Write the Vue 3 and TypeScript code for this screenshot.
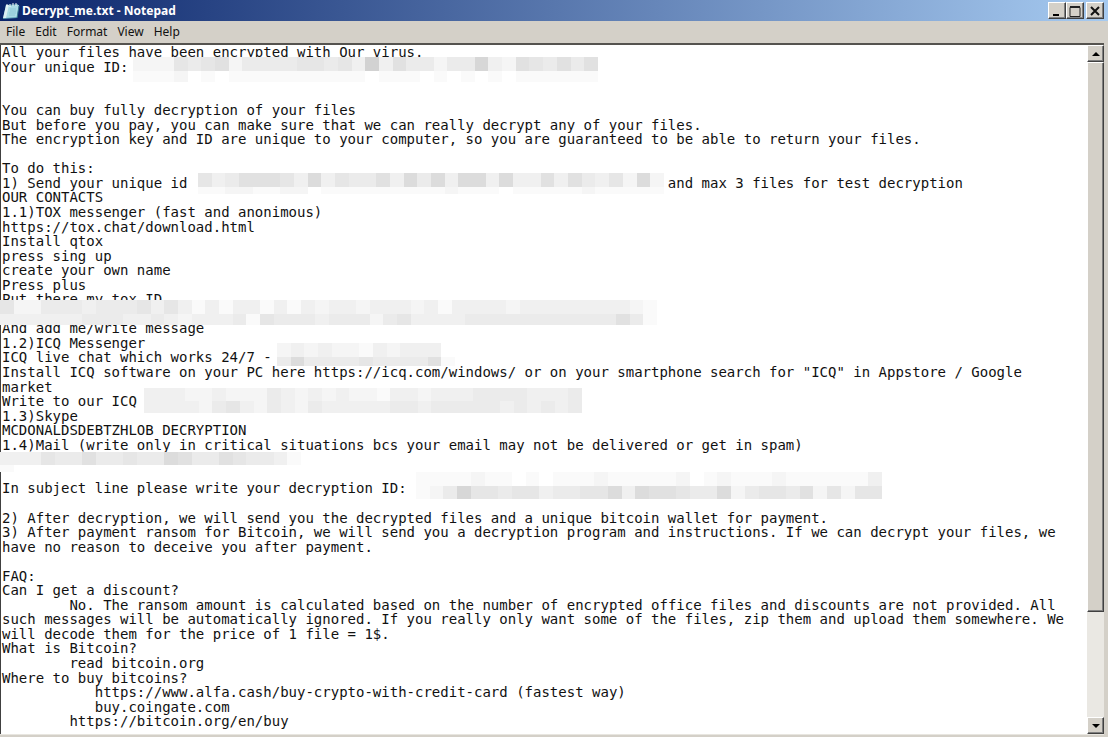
<script setup lang="ts">
import { ref } from 'vue'

interface MosaicRow {
  height: number
  cells: string
}

interface Mosaic {
  x: number
  y: number
  width: number
  rows: MosaicRow[]
}

const menus: string[] = ['File', 'Edit', 'Format', 'View', 'Help']

const gap = ' '.repeat(57)

const note = ref<string>(
  [
    'All your files have been encrypted with Our virus.',
    'Your unique ID:',
    '',
    '',
    'You can buy fully decryption of your files',
    'But before you pay, you can make sure that we can really decrypt any of your files.',
    'The encryption key and ID are unique to your computer, so you are guaranteed to be able to return your files.',
    '',
    'To do this:',
    '1) Send your unique id' + gap + 'and max 3 files for test decryption',
    'OUR CONTACTS',
    '1.1)TOX messenger (fast and anonimous)',
    'https://tox.chat/download.html',
    'Install qtox',
    'press sing up',
    'create your own name',
    'Press plus',
    'Put there my tox ID',
    '',
    'And add me/write message',
    '1.2)ICQ Messenger',
    'ICQ live chat which works 24/7 -',
    'Install ICQ software on your PC here https://icq.com/windows/ or on your smartphone search for "ICQ" in Appstore / Google',
    'market',
    'Write to our ICQ',
    '1.3)Skype',
    'MCDONALDSDEBTZHLOB DECRYPTION',
    '1.4)Mail (write only in critical situations bcs your email may not be delivered or get in spam)',
    '',
    '',
    'In subject line please write your decryption ID:',
    '',
    '2) After decryption, we will send you the decrypted files and a unique bitcoin wallet for payment.',
    '3) After payment ransom for Bitcoin, we will send you a decryption program and instructions. If we can decrypt your files, we',
    'have no reason to deceive you after payment.',
    '',
    'FAQ:',
    'Can I get a discount?',
    '\tNo. The ransom amount is calculated based on the number of encrypted office files and discounts are not provided. All',
    'such messages will be automatically ignored. If you really only want some of the files, zip them and upload them somewhere. We',
    'will decode them for the price of 1 file = 1$.',
    'What is Bitcoin?',
    '\tread bitcoin.org',
    'Where to buy bitcoins?',
    '\t   https://www.alfa.cash/buy-crypto-with-credit-card (fastest way)',
    '\t   buy.coingate.com',
    '\thttps://bitcoin.org/en/buy',
  ].join('\n'),
)

// Coordinates are relative to the editor; each digit is the darkness of one block.
const mosaics: Mosaic[] = [
  {
    x: 133, y: 12, width: 465,
    rows: [
      { height: 14, cells: '2225456244445545393644244832654646' },
      { height: 11, cells: '1112010111111111101110101010111111' },
    ],
  },
  {
    x: 198, y: 128, width: 466,
    rows: [
      { height: 14, cells: '5346665373544637473773733636435272' },
      { height: 7, cells: '1122112201111111112111011111211111' },
    ],
  },
  {
    x: 0, y: 255, width: 657,
    rows: [
      { height: 14, cells: '522444344453531313313132332333231333323333333321' },
      { height: 11, cells: '333333444334323334154443444245333344444444444641' },
    ],
  },
  {
    x: 277, y: 298, width: 178,
    rows: [
      { height: 14, cells: '2323221323330' },
      { height: 9, cells: '4744445444461' },
    ],
  },
  {
    x: 144, y: 343, width: 438,
    rows: [
      { height: 13, cells: '33322322243232322133233344443334' },
      { height: 12, cells: '33332453243243333344344444343434' },
    ],
  },
  {
    x: 0, y: 407, width: 301,
    rows: [
      { height: 13, cells: '3335446445447644654431' },
      { height: 7, cells: '1000000000000000000000' },
    ],
  },
  {
    x: 416, y: 427, width: 466,
    rows: [
      { height: 14, cells: '1111211010111211111201211121111113' },
      { height: 13, cells: '1248554553445573766544724554625255' },
    ],
  },
]

function shade(cell: string): string {
  const level = 255 - Number(cell) * 5
  return `rgb(${level}, ${level}, ${level})`
}
</script>

<template>
  <div class="window">
    <header class="title-bar">
      <svg class="app-icon" viewBox="0 0 18 18" aria-hidden="true">
        <path d="M4 3 L16 2 L15 16 L1 17 Z" fill="#5b9fb5" />
        <path d="M5 4 L17 3 L15 15 L3 16 Z" fill="#a9dbe6" />
        <path d="M4 3 L7 3 L4 16 L1 16 Z" fill="#dceff3" />
        <path d="M8 7 H14 M8 9 H14 M7 11 H14 M7 13 H13" stroke="#8cc8d6" stroke-width="1" />
        <path d="M5 2 V5 M8 2 V5 M11 1 V4 M14 1 V4" stroke="#f4fafa" stroke-width="1" />
        <path d="M15 16 L17 4" stroke="#397e93" stroke-width="1" />
      </svg>
      <h1 class="title">Decrypt_me.txt - Notepad</h1>
      <div class="controls">
        <button class="raised control" type="button" aria-label="Minimize">
          <svg viewBox="0 0 14 14"><path d="M3 11 H9" stroke="#000" stroke-width="2" /></svg>
        </button>
        <button class="raised control" type="button" aria-label="Maximize">
          <svg viewBox="0 0 14 14">
            <path d="M2 3.5 H12 V12.5 H2 Z" fill="none" stroke="#222" />
            <path d="M2 3 H12" stroke="#222" stroke-width="2" />
          </svg>
        </button>
        <button class="raised control close" type="button" aria-label="Close">
          <svg viewBox="0 0 14 14"><path d="M3 3 L11 11 M11 3 L3 11" stroke="#111" stroke-width="2" /></svg>
        </button>
      </div>
    </header>

    <nav class="menu-bar" aria-label="Menu">
      <button v-for="menu in menus" :key="menu" class="menu" type="button">{{ menu }}</button>
    </nav>

    <main class="body">
      <div class="editor">
        <textarea v-model="note" class="text" aria-label="Document text" wrap="off" spellcheck="false"></textarea>
        <div
          v-for="(mosaic, index) in mosaics"
          :key="index"
          class="mosaic"
          :style="{ left: mosaic.x + 'px', top: mosaic.y + 'px', width: mosaic.width + 'px' }"
        >
          <div
            v-for="(row, rowIndex) in mosaic.rows"
            :key="rowIndex"
            class="mosaic-row"
            :style="{ height: row.height + 'px' }"
          >
            <span
              v-for="(cell, cellIndex) in row.cells"
              :key="cellIndex"
              class="cell"
              :style="{ background: shade(cell) }"
            ></span>
          </div>
        </div>
      </div>

      <div class="scrollbar">
        <button class="raised arrow" type="button" aria-label="Scroll up">
          <svg viewBox="0 0 14 14"><path d="M3 9 L7 5 L11 9 Z" fill="#000" /></svg>
        </button>
        <div class="track">
          <div class="raised thumb"></div>
        </div>
        <button class="raised arrow" type="button" aria-label="Scroll down">
          <svg viewBox="0 0 14 14"><path d="M3 5 L7 9 L11 5 Z" fill="#000" /></svg>
        </button>
      </div>
    </main>
  </div>
</template>

<style>
body {
  margin: 0;
  background: #d4d0c8;
}
</style>

<style scoped>
.window {
  display: flex;
  flex-direction: column;
  box-sizing: border-box;
  height: 100vh;
  background: #d4d0c8;
  font-family: "Noto Sans", "Liberation Sans", sans-serif;
}

.title-bar {
  display: flex;
  align-items: center;
  flex: none;
  height: 21px;
  padding: 0 4px 0 2px;
  background: linear-gradient(90deg, #0a246a, #a6caf0);
}

.app-icon {
  width: 18px;
  height: 18px;
}

.title {
  flex: 1;
  margin: 0 0 0 2px;
  color: #fff;
  font-size: 12px;
  font-weight: 700;
  line-height: 20px;
  white-space: nowrap;
}

.controls {
  display: flex;
}

.raised {
  box-sizing: border-box;
  padding: 0;
  border: 1px solid;
  border-color: #fff #404040 #404040 #fff;
  border-radius: 0;
  background: #d4d0c8;
  box-shadow: inset -1px -1px #808080;
}

.control {
  width: 18px;
  height: 17px;
}

.control svg,
.arrow svg {
  display: block;
  width: 14px;
  height: 14px;
  margin: 0 auto;
}

.close {
  margin-left: 2px;
}

.menu-bar {
  display: flex;
  flex: none;
  height: 22px;
  padding-left: 1px;
}

.menu {
  padding: 0 5px;
  border: 0;
  background: none;
  color: #111;
  font-family: inherit;
  font-size: 12px;
  line-height: 22px;
}

.body {
  display: flex;
  flex: 1;
  min-height: 0;
  margin: 0 4px 2px 0;
  border-top: 2px solid #55534f;
  border-bottom: 1px solid #e8e6e0;
}

.editor {
  position: relative;
  flex: 1;
  overflow: hidden;
  background: #fff;
}

.text {
  display: block;
  box-sizing: border-box;
  width: 100%;
  height: 100%;
  padding: 0 0 0 1px;
  border: 0;
  border-left: 1px solid #404040;
  outline: 0;
  overflow: hidden;
  resize: none;
  background: #fff;
  color: #111;
  font-family: "DejaVu Sans Mono", "Liberation Mono", monospace;
  font-size: 14px;
  line-height: 1.04;
  tab-size: 8;
  white-space: pre;
}

.mosaic {
  position: absolute;
  pointer-events: none;
}

.mosaic-row {
  display: flex;
}

.cell {
  flex: 1;
}

.scrollbar {
  display: flex;
  flex-direction: column;
  flex: none;
  width: 17px;
}

.arrow {
  flex: none;
  height: 17px;
}

.track {
  flex: 1;
  background: #eae8e3;
}

.thumb {
  height: 84%;
}
</style>
